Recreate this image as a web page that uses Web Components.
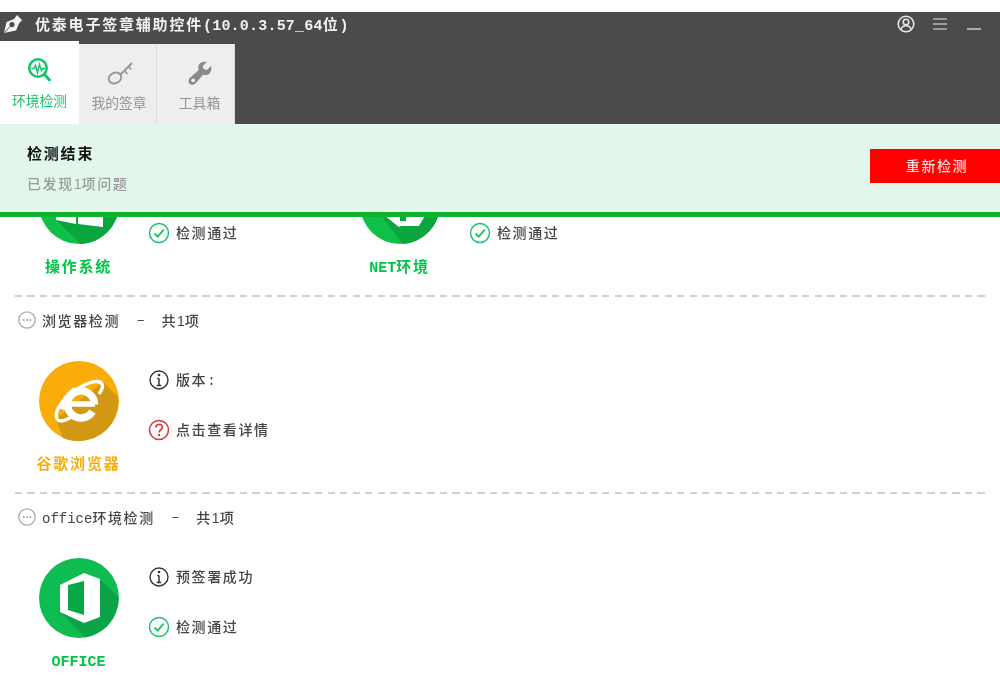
<!DOCTYPE html>
<html lang="zh-CN"><head><meta charset="utf-8"><title>优泰电子签章辅助控件</title>
<style>
html,body{margin:0;padding:0;background:#fff}
body{width:1000px;height:690px;overflow:hidden;font-family:"Liberation Mono","Noto Sans CJK SC",monospace;color:#444}
.row{display:flex}
</style></head><body>
<app-shell>
  <title-bar slot="top" text="优泰电子签章辅助控件(10.0.3.57_64位)"></title-bar>
  <result-banner slot="top" title="检测结束" sub="已发现1项问题" action="重新检测"></result-banner>
  <check-section class="first">
    <div class="row">
      <check-item icon="win" label="操作系统" color="#00c648"><status-line kind="info"></status-line><status-line kind="ok">检测通过</status-line></check-item>
      <check-item icon="net" label="NET环境" color="#00c648"><status-line kind="info"></status-line><status-line kind="ok">检测通过</status-line></check-item>
    </div>
  </check-section>
  <check-section heading="浏览器检测" count="共1项">
    <check-item icon="ie" label="谷歌浏览器" color="#f9ad0a"><status-line kind="info">版本:</status-line><status-line kind="help">点击查看详情</status-line></check-item>
  </check-section>
  <check-section heading="office环境检测" count="共1项">
    <check-item icon="office" label="OFFICE" color="#00c648"><status-line kind="info">预签署成功</status-line><status-line kind="ok">检测通过</status-line></check-item>
  </check-section>
</app-shell>
<script>
const FONT='"Liberation Mono","Noto Sans CJK SC",monospace';
const lat=s=>s.replace(/[\x21-\x7e]+/g,m=>`<span class="lat">${m}</span>`);
function def(name,html){
  customElements.define(name,class extends HTMLElement{
    connectedCallback(){
      if(this.shadowRoot)return;
      this.attachShadow({mode:'open'}).innerHTML=html(this);
    }
  });
}
def('app-shell',()=>`<style>:host{display:block;width:1000px;height:690px;background:#fff;overflow:hidden;filter:blur(.45px)}
.spacer{height:12px}
.top{position:relative;z-index:2}
.body{overflow:hidden;height:473px;padding:0 10px 0 15px}
</style><div class="spacer"></div><div class="top"><slot name="top"></slot></div><div class="body"><slot></slot></div>`);

const tabIcons={
 env:`<svg width="28" height="28" viewBox="0 0 28 28" fill="none" stroke="#13c469"><circle cx="12" cy="11" r="8.700" stroke-width="2.600"/><path d="M18.500 17.500l5 5.500" stroke-width="3" stroke-linecap="round"/><path d="M5.500 11.500h2.500l1.500-3 2 7 2-8 2 6 1-2h2.500" stroke-width="1.500"/></svg>`,
 key:`<svg width="28" height="28" viewBox="0 0 28 28" fill="none" stroke="#999" stroke-width="1.900"><ellipse cx="10" cy="19" rx="6.500" ry="5.200" transform="rotate(-25 10 19)"/><path d="M15 16L27 4M19.500 11.500l3 3.500M23.500 7.500l2.500 3"/></svg>`,
 tool:`<svg width="28" height="28" viewBox="-2 -3 30 30"><path fill="#8a8a8a" d="M24.800 4.600l-4.600 4.200-3.400-1-.9-3.400 4.400-4C16.800-.6 13.500.4 12 2.900c-1.200 2-1 4.200-.3 5.900L2.600 16.700c-2.300 1.900-2.500 4.900-.7 6.700 1.800 1.900 4.800 1.700 6.800-.6l7.500-9c2.200.8 4.800.6 6.700-1.100 2.200-2 2.900-5.200 1.900-8.100z"/><circle cx="5.600" cy="19.800" r="2" fill="#eee"/></svg>`
};
def('title-bar',h=>`<style>:host{display:block;font-family:${FONT}}
.bar{background:#4b4b4b;height:112px;display:flex;flex-direction:column}
.head{height:24px;display:flex;align-items:center;padding:0 19px 0 4px;flex:none}
.logo{width:18px;height:18px;margin-right:13px;flex:none}
.t{color:#f1f1f1;font-size:15px;font-weight:700;letter-spacing:1.800px;white-space:nowrap;flex:1}
.lat{letter-spacing:.2px}
.ctl{display:flex;gap:18px;align-items:center}
.tabs{display:flex;align-items:flex-end;flex:1}
</style><div class="bar"><div class="head">
<svg class="logo" viewBox="0 0 18 18"><path fill="#f2f2f2" fill-rule="evenodd" d="M0 18L2.500 7l7.500-3L13 0l5 5-3 3.500L12 15.500zM8 7a2.600 2.600 0 1 0 .01 0z"/><path d="M.5 17.500l6.500-7" stroke="#4b4b4b" stroke-width=".9"/></svg>
<span class="t">${lat(h.getAttribute('text'))}</span>
<div class="ctl">
<svg width="18" height="18" viewBox="0 0 18 18" fill="none" stroke="#e8e8e8" stroke-width="1.600"><circle cx="9" cy="9" r="7.800"/><circle cx="9" cy="7" r="2.800"/><path d="M3.800 14.500c1-3 3-3.800 5.200-3.800s4.200.8 5.200 3.800"/></svg>
<svg width="14" height="14" viewBox="0 0 14 14" stroke="#9b9b9b" stroke-width="2"><path d="M0 2h14M0 7h14M0 12h14"/></svg>
<svg width="14" height="14" viewBox="0 0 14 14" style="margin-left:2px" stroke="#a9a9a9" stroke-width="2"><path d="M0 12h14"/></svg>
</div></div>
<div class="tabs"><tab-item icon="env" label="环境检测" active></tab-item><tab-item icon="key" label="我的签章" shift="3"></tab-item><tab-item icon="tool" label="工具箱" shift="8"></tab-item></div></div>`);
def('tab-item',h=>{const a=h.hasAttribute('active');return `<style>:host{display:block;font-family:"Noto Sans CJK SC",sans-serif}
.t{box-sizing:border-box;width:${a?79:78}px;height:${a?83:80}px;background:${a?'#fff':'#eeeeee'};border-right:${a?0:'1px solid #dcdcdc'};display:flex;flex-direction:column;align-items:center;color:${a?'#19c76d':'#959595'};font-size:13.800px;padding:${a?16:15}px 0 0 ${h.getAttribute('shift')||0}px}
svg{display:block;margin-bottom:5px}span{line-height:20px;white-space:nowrap}</style><div class="t">${tabIcons[h.getAttribute('icon')]}<span>${h.getAttribute('label')}</span></div>`});
def('result-banner',h=>`<style>:host{display:block;font-family:${FONT}}
.b{box-sizing:border-box;height:93px;background:#e3f6ec;border-bottom:5px solid #0eb42d;display:flex;align-items:flex-start;justify-content:space-between}
.l{padding:22px 0 0 27px}.h{color:#111;font-size:15px;font-weight:700;letter-spacing:1.800px;line-height:20px}
.s{color:#999;font-size:14px;font-weight:500;letter-spacing:1.600px;line-height:20px;margin-top:8px;white-space:nowrap}
.lat{letter-spacing:0;font-family:"Liberation Sans",sans-serif}
.a{margin-top:25px;width:130px;height:34px;background:#fe0000;color:#ffd9d9;font-size:14px;font-weight:500;letter-spacing:1.600px;display:flex;align-items:center;justify-content:center;padding:0 0 2px 4px;box-sizing:border-box}
</style><div class="b"><div class="l"><div class="h">${h.getAttribute('title')}</div><div class="s">${lat(h.getAttribute('sub'))}</div></div><div class="a">${h.getAttribute('action')}</div></div>`);
def('check-section',h=>{const head=h.getAttribute('heading');const first=h.classList.contains('first');return `<style>:host{display:block}
.sec{${first?'margin-top:-53px;padding-bottom:16px;':'height:197px;'}box-sizing:border-box}
.dash{height:2px;background:repeating-linear-gradient(90deg,#d0d0d0 0 7px,transparent 7px 12.500px)}
.hd{display:flex;align-items:center;height:18px;margin:14px 0 32px 3px;font-size:14px;font-weight:500;color:#444;white-space:nowrap;letter-spacing:1.600px}
.hd svg{margin-right:6px;flex:none}.c{margin-left:16.500px}
.lat{letter-spacing:0}
.c .lat{font-family:"Liberation Sans",sans-serif}
.d{letter-spacing:0}
</style><div class="sec">${head?`<div class="dash"></div><div class="hd"><svg width="18" height="18" viewBox="0 0 18 18" fill="none"><circle cx="9" cy="9" r="8.200" stroke="#aaa" stroke-width="1.300"/><path d="M5 9h1.500M8.300 9h1.500M11.600 9h1.500" stroke="#888" stroke-width="1.400"/></svg><span>${lat(head)}</span><span class="c d">–</span><span class="c">${lat(h.getAttribute('count'))}</span></div>`:''}<slot></slot></div>`});
const bigIcons={
 win:`<circle cx="40" cy="40" r="40" fill="#0ec047"/><path d="M17 56L42 80A40 40 0 0 0 80 40L64 20z" fill="#0aa53d"/><path d="M17 22l20-4v20H17zM39 18l25-5v25H39zM17 40h20v20l-20-4zM39 40h25v23l-25-3z" fill="#fff"/>`,
 net:`<circle cx="40" cy="40" r="40" fill="#0ec047"/><path d="M23 54L43 80A40 40 0 0 0 80 40L64 30z" fill="#0aa53d"/><path d="M20 48L39 63l2-1h18l7-12zM40 52h6v5h-6z" fill="#fff" fill-rule="evenodd"/>`,
 ie:`<circle cx="40" cy="40" r="40" fill="#faac0a"/><path d="M64 21L79 36A40 40 0 0 1 24 77L17 58z" fill="#d19813"/><g fill="none" stroke="#fff"><path d="M56 43H28" stroke-width="5.500"/><path d="M55.500 43.500A13.500 13.500 0 1 0 53.500 50.500" stroke-width="7.500"/><path d="M18 58C14 50 26 35 40 27 50 21 60 18 63 23 65 26 62 30 60 33" stroke-width="3.500"/><path d="M18 58C21 62 29 59 35 54" stroke-width="3.500"/><path d="M22 48C25 40 30 34 37 29" stroke-width="7"/></g>`,
 office:`<circle cx="40" cy="40" r="40" fill="#0fbc52"/><path d="M61 21L79 39A40 40 0 0 1 46 79.500L21 54z" fill="#0aa347"/><path d="M21 27L45 15l16 6v38l-16 6-24-11z" fill="#fff"/><path d="M29 27l16-4v34l-16-5z" fill="#08a847"/>`
};
def('check-item',h=>`<style>:host{display:flex;width:321px;flex:none;font-family:${FONT}}
.l{width:133px;flex:none;display:flex;flex-direction:column;align-items:center;box-sizing:border-box}
svg{display:block;flex:none;margin-left:-5px}
.cap{color:${h.getAttribute('color')};font-size:15px;font-weight:700;letter-spacing:1.800px;line-height:20px;margin-top:15px;white-space:nowrap;margin-left:-6px}
.lat{letter-spacing:0}
.r{padding-top:8px;display:flex;flex-direction:column;gap:28px}
</style><div class="l"><svg width="80" height="80" viewBox="0 0 80 80">${bigIcons[h.getAttribute('icon')]}</svg><div class="cap">${lat(h.getAttribute('label'))}</div></div><div class="r"><slot></slot></div>`);
const st={
 ok:`<circle cx="11" cy="11" r="9.500" stroke="#1fc16a" stroke-width="1.500" fill="none"/><path d="M6.500 11.500l3.200 3.200 6-7" stroke="#1fc16a" stroke-width="1.800" fill="none"/>`,
 info:`<circle cx="11" cy="11" r="9" stroke="#333" stroke-width="1.400" fill="none"/><path d="M11 9.500v6.500M8.700 16.500h4.600M9.300 9.500H11" stroke="#333" stroke-width="1.500" fill="none"/><circle cx="11" cy="6" r="1.300" fill="#333"/>`,
 help:`<circle cx="11" cy="11" r="9.500" stroke="#d8383c" stroke-width="1.500" fill="none"/><path d="M7.800 8.500c0-4 6.600-4 6.600-.2 0 2.500-3.300 2.500-3.300 5.200" stroke="#d8383c" stroke-width="1.700" fill="none"/><circle cx="11.100" cy="16" r="1.200" fill="#d8383c"/>`
};
def('status-line',h=>`<style>:host{display:flex;align-items:center;height:22px;font-size:14px;font-weight:500;color:#444;letter-spacing:1.600px;white-space:nowrap;font-family:${FONT}}
svg{margin-right:6px}span{margin-top:-2px}</style><svg width="22" height="22" viewBox="0 0 22 22">${st[h.getAttribute('kind')]}</svg><span><slot></slot></span>`);
</script></body></html>
